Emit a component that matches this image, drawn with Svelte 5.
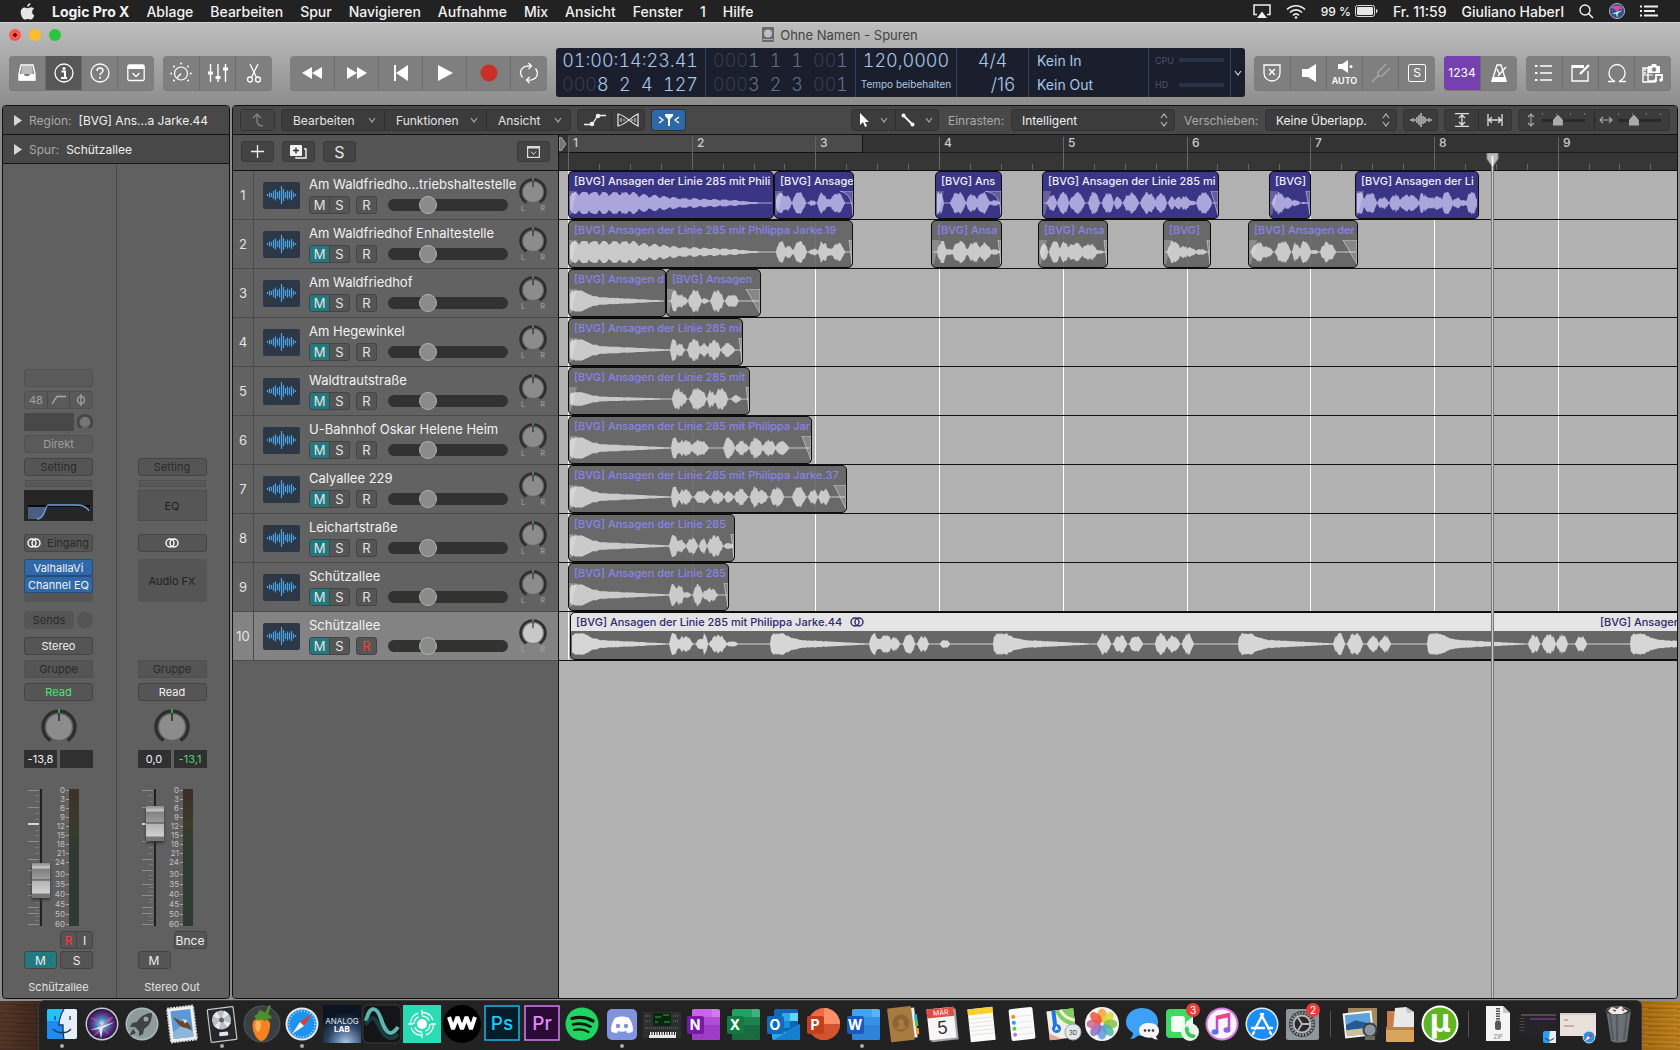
<script>
  const menus = ['Ablage', 'Bearbeiten', 'Spur', 'Navigieren', 'Aufnahme', 'Mix', 'Ansicht', 'Fenster', '1', 'Hilfe'];

  // bar lines in px from the left edge of the timeline
  const bars = Array.from({ length: 16 }, (_, i) => ({ n: i + 1, x: Math.round(9 + i * 123.7) }));
  const ticks = Array.from({ length: 64 }, (_, i) => Math.round(9 + i * 30.925)).filter((_, i) => i % 4);

  const LINE = '[BVG] Ansagen der Linie 285';

  // decaying tone: list of [x, amplitude]
  function ring(x, len, peak = 11) {
    const shape = [[0, 0.7], [0.03, 1], [0.12, 1], [0.2, 0.6], [0.3, 0.38], [0.5, 0.28], [0.7, 0.18], [0.9, 0.08], [1, 0.04]];
    return [[x - 1, 0], ...shape.map(([t, a]) => [x + t * len, a * peak])];
  }

  const longTone = [[0, 9], [5, 11], [60, 11], [75, 8], [90, 7], [110, 5], [140, 4], [165, 3], [185, 1], [205, 0]];

  // blobs are [centre, half width, amplitude]
  const tracks = [
    { name: 'Am Waldfriedho...triebshaltestelle', muted: false, regions: [
      { x: 9, w: 206, label: LINE + ' mit Phili', beat: true, tone: longTone, blobs: [] },
      { x: 215, w: 80, label: '[BVG] Ansage', fade: 13, curve: true, blobs: [[5, 4, 11], [11, 5, 8], [24, 6, 11], [37, 3, 3], [47, 4, 11], [54, 4, 4], [62, 7, 10]] },
      { x: 376, w: 67, label: '[BVG] Ans', fade: 16, curve: true, blobs: [[3, 4, 11], [22, 7, 11], [36, 5, 9], [47, 6, 11], [58, 5, 3]] },
      { x: 483, w: 177, label: LINE + ' mi', fade: 7, blobs: [[9, 4, 8], [20, 5, 11], [34, 7, 10], [51, 5, 11], [65, 5, 10], [75, 3, 7], [88, 7, 10], [105, 7, 11], [118, 5, 10], [129, 3, 6], [135, 3, 6], [142, 4, 7], [149, 3, 3], [161, 7, 11]] },
      { x: 710, w: 42, label: '[BVG]', fade: 4, blobs: [[9, 6, 11], [18, 4, 6], [25, 4, 3], [34, 3, 1]] },
      { x: 796, w: 124, label: '[BVG] Ansagen der Li', fade: 0, blobs: [[4, 4, 11], [14, 6, 11], [27, 5, 6], [39, 5, 9], [53, 10, 8], [66, 2, 11], [70, 3, 8], [76, 3, 6], [82, 5, 7], [91, 5, 11], [101, 4, 5], [107, 4, 3], [116, 5, 11]] }
    ] },
    { name: 'Am Waldfriedhof Enhaltestelle', muted: true, regions: [
      { x: 9, w: 285, label: LINE + ' mit Philippa Jarke.19', fade: 3, beat: true, tone: longTone, blobs: [[212, 4, 11], [219, 5, 6], [231, 6, 11], [245, 5, 3], [254, 4, 11], [261, 4, 4], [269, 6, 9]] },
      { x: 372, w: 71, label: '[BVG] Ansa', fade: 3, blobs: [[10, 4, 11], [18, 4, 3], [28, 7, 11], [42, 6, 10], [53, 6, 9], [62, 5, 3]] },
      { x: 479, w: 70, label: '[BVG] Ansa', fade: 3, blobs: [[5, 3, 10], [16, 5, 11], [25, 4, 10], [36, 8, 9], [50, 8, 8], [60, 4, 2]] },
      { x: 604, w: 48, label: '[BVG]', fade: 3, blobs: [[10, 6, 11], [20, 4, 6], [27, 4, 5], [37, 5, 3]] },
      { x: 689, w: 110, label: '[BVG] Ansagen der', fade: 14, blobs: [[9, 6, 10], [17, 6, 6], [34, 7, 11], [47, 3, 9], [56, 5, 11], [65, 4, 2], [79, 7, 10]] }
    ] },
    { name: 'Am Waldfriedhof', muted: true, regions: [
      { x: 9, w: 98, label: '[BVG] Ansagen d', fade: 0, tone: ring(0, 98), blobs: [] },
      { x: 107, w: 95, label: '[BVG] Ansagen', fade: 14, blobs: [[8, 3, 11], [14, 6, 6], [28, 6, 11], [38, 3, 3], [50, 6, 11], [65, 6, 7]] }
    ] },
    { name: 'Am Hegewinkel', muted: true, regions: [
      { x: 9, w: 175, label: LINE + ' mi', fade: 3, tone: ring(0, 105), blobs: [[105, 3, 11], [111, 4, 6], [125, 6, 11], [135, 4, 7], [145, 6, 10], [159, 6, 7]] }
    ] },
    { name: 'Waldtrautstraße', muted: true, regions: [
      { x: 9, w: 182, label: LINE + ' mit', fade: 3, tone: ring(0, 105, 7), blobs: [[108, 4, 11], [113, 4, 7], [129, 8, 11], [142, 3, 9], [152, 6, 11], [167, 4, 4]] }
    ] },
    { name: 'U-Bahnhof Oskar Helene Heim', muted: true, regions: [
      { x: 9, w: 244, label: LINE + ' mit Philippa Jar', fade: 9, tone: ring(0, 105), blobs: [[106, 3, 11], [116, 8, 8], [131, 8, 8], [160, 5, 11], [173, 6, 7], [187, 6, 10], [200, 6, 8], [213, 6, 7]] }
    ] },
    { name: 'Calyallee 229', muted: true, regions: [
      { x: 9, w: 279, label: LINE + ' mit Philippa Jarke.37', fade: 12, tone: ring(0, 105), blobs: [[106, 3, 11], [116, 6, 8], [133, 7, 7], [148, 6, 7], [160, 4, 6], [172, 6, 8], [186, 4, 10], [193, 5, 7], [208, 6, 10], [230, 6, 10], [244, 4, 7], [255, 5, 8]] }
    ] },
    { name: 'Leichartstraße', muted: true, regions: [
      { x: 9, w: 167, label: LINE, fade: 3, tone: ring(0, 105), blobs: [[105, 4, 11], [112, 4, 6], [123, 5, 8], [134, 3, 8], [146, 7, 11], [160, 5, 3]] }
    ] },
    { name: 'Schützallee', muted: true, regions: [
      { x: 9, w: 161, label: LINE, fade: 4, tone: ring(0, 105), blobs: [[104, 3, 11], [110, 5, 9], [118, 3, 3], [129, 4, 11], [141, 7, 7]] }
    ] },
    { name: 'Schützallee', muted: true, selected: true, regions: [
      { x: 11, w: 1400, label: LINE + ' mit Philippa Jarke.44', selected: true, fade: 0,
        tone: [...ring(0, 100), ...ring(200, 100), ...ring(423, 100), ...ring(668, 100), ...ring(857, 100), ...ring(1060, 100)],
        blobs: [[103, 4, 11], [114, 7, 8], [130, 4, 6], [134, 2, 11], [147, 8, 9], [161, 5, 3], [303, 4, 11], [314, 7, 9], [324, 4, 7], [338, 5, 11], [352, 5, 8], [374, 4, 4], [533, 6, 10], [549, 6, 9], [565, 6, 8], [590, 5, 11], [602, 6, 8], [617, 5, 10], [768, 5, 11], [784, 7, 11], [802, 5, 8], [814, 5, 8], [963, 5, 9], [978, 6, 10], [991, 5, 9], [1010, 5, 8]] }
    ] }
  ];

  function amplitude(region, x) {
    let a = 0.6;
    const tone = region.tone ?? [];
    for (let i = 1; i < tone.length; i++) {
      const [x0, a0] = tone[i - 1];
      const [x1, a1] = tone[i];
      if (x >= x0 && x < x1) a = Math.max(a, a0 + ((a1 - a0) * (x - x0)) / (x1 - x0));
    }
    if (region.beat) a *= 0.7 + 0.4 * Math.abs(Math.sin(x / 3.2));
    const noise = Math.abs(Math.sin((x + region.x) * 12.9898) * 43758.5453) % 1;
    a *= 0.85 + 0.2 * noise;
    for (const [c, hw, peak] of region.blobs) {
      const d = Math.abs(x - c) / (hw + 1);
      if (d < 1) a = Math.max(a, peak * (1 - d ** 2.4) * (0.72 + 0.42 * noise));
    }
    return Math.min(11, Math.max(0.6, a));
  }

  function wavePath(region) {
    const up = [];
    const down = [];
    for (let x = 1; x < region.w - 2; x++) {
      const a = amplitude(region, x);
      up.push(`${x} ${(12 - a).toFixed(1)}`);
      down.unshift(`${x} ${(12 + a).toFixed(1)}`);
    }
    return `M${up.join('L')}L${down.join('L')}Z`;
  }

  const trackBars = [2, 5, 4, 8, 11, 6, 9, 18, 12, 6, 9, 7, 10, 5, 2];

  const scale = [[0, 1], [3, 10], [6, 19], [9, 28], [12, 37], [15, 46], [18, 55], [21, 64], [24, 73], [30, 85], [35, 95], [40, 105], [45, 115], [50, 125], [60, 135]];
  const longTicks = [1, 18, 52, 70, 81, 95, 106, 118, 124, 135];
  const shortTicks = [6, 12, 24, 30, 41, 46, 58, 64, 75, 86, 90, 98, 102, 110, 113, 121, 127, 131];

  const leftApps = [
    { name: 'Finder', running: true }, { name: 'Siri' }, { name: 'Launchpad' }, { name: 'Mail' },
    { name: 'Logic', running: true }, { name: 'FL Studio' }, { name: 'Safari', running: true }, { name: 'Analog Lab' },
    { name: 'Serum' }, { name: 'Kontakt' }, { name: 'Waves' }, { name: 'Photoshop' }, { name: 'Premiere' },
    { name: 'Spotify' }, { name: 'Discord', running: true }, { name: 'Synth' }, { name: 'OneNote' },
    { name: 'Excel' }, { name: 'Outlook' }, { name: 'PowerPoint' }, { name: 'Word', running: true },
    { name: 'Contacts' }, { name: 'Calendar' }, { name: 'Notes' }, { name: 'Reminders' }, { name: 'Maps' },
    { name: 'Photos' }, { name: 'Messages' }, { name: 'FaceTime', badge: 3 }, { name: 'iTunes' },
    { name: 'App Store' }, { name: 'Settings', badge: 2 }
  ];
  const middleApps = [{ name: 'Preview' }, { name: 'Unarchiver' }, { name: 'Torrent' }];
  const rightApps = [{ name: 'Zip' }, { name: 'Finder window' }, { name: 'Safari window' }, { name: 'Trash' }];
  const office = {
    OneNote: { c: 'N', dark: '#7719aa', main: '#ca64ea', mid: '#9332bf' },
    Excel: { c: 'X', dark: '#107c41', main: '#21a366', mid: '#185c37' },
    Word: { c: 'W', dark: '#185abd', main: '#41a5ee', mid: '#2b7cd3' }
  };
  const petals = ['#f8a02a', '#d9d83a', '#86c440', '#4fb6a0', '#5b9bdc', '#8a6fc0', '#d0619a', '#ee5340'];
</script>

{#snippet chevron()}
  <svg class="chev" width="8" height="6" viewBox="0 0 8 6"><path d="M1 1l3 4 3-4" fill="none" stroke="currentColor" stroke-width="1.2" /></svg>
{/snippet}

{#snippet updown()}
  <svg class="updown" width="8" height="14" viewBox="0 0 8 14"><path d="M1 5l3-4 3 4M1 9l3 4 3-4" fill="none" stroke="#bbb" stroke-width="1.1" /></svg>
{/snippet}

{#snippet rings(color)}
  <svg width="14" height="10" viewBox="0 0 14 10"><g fill="none" stroke={color} stroke-width="1.4"><circle cx="5" cy="5" r="4" /><circle cx="9" cy="5" r="4" /></g></svg>
{/snippet}

{#snippet knob(size, face)}
  <svg width={size} height={size} viewBox="0 0 36 36">
    <path d="M9.500 31.500A16 16 0 1 1 26.500 31.500" fill="none" stroke="#2e2e2e" stroke-width="3.400" />
    <circle cx="18" cy="18" r="13.500" fill={face} stroke="#555" stroke-width=".8" />
    <path d="M18 4v8" stroke="#1a1a1a" stroke-width="1.300" />
    <path d="M18 0v4" stroke="#44d65c" stroke-width="1.400" />
  </svg>
{/snippet}

{#snippet fader(name, value, hot)}
  <div class="fader">
    <svg width="69" height="138" viewBox="0 0 69 138">
      <defs>
        <linearGradient id="meter-{name}" x1="0" y1="0" x2="0" y2="1">
          <stop offset="0" stop-color={hot} /><stop offset=".25" stop-color="#3b3a2c" /><stop offset=".4" stop-color="#2f3b31" /><stop offset="1" stop-color="#2e3b32" />
        </linearGradient>
      </defs>
      <g stroke="#8e8e8e">
        {#each longTicks as y}<path d="M4 {y + 0.5}h11" />{/each}
        {#each shortTicks as y}<path d="M11 {y + 0.5}h4" stroke="#7c7c7c" />{/each}
      </g>
      <path d="M4 35h11" stroke="#fff" stroke-width="1.500" />
      <rect x="16" y="0" width="2" height="137" fill="#222" />
      {#each scale as [n, y]}
        <text x="41" y={y + 3} text-anchor="end">{n}</text>
        <path d="M42 {y + 0.5}h3" stroke="#a5a5a5" />
      {/each}
      <rect x="45" y="0" width="10" height="137" fill="url(#meter-{name})" />
    </svg>
    <input class="vrange" type="range" min="0" max="100" {value} aria-label="Lautstärke {name}" />
  </div>
{/snippet}

{#snippet appIcon(name)}
  <svg width="40" height="40" viewBox="0 0 40 40">
    {#if name === 'Finder'}
      <rect x="5" y="5" width="30" height="30" rx="2" fill="#2a9df4" />
      <path d="M5 7a2 2 0 0 1 2-2h14c-3 5-4 10-4 15h5v15H7a2 2 0 0 1-2-2z" fill="#1e8bf0" />
      <path d="M5 7a2 2 0 0 1 2-2h14c-2 3-3 7-4 12H5z" fill="#22c3f5" />
      <path d="M22 5h11a2 2 0 0 1 2 2v26a2 2 0 0 1-2 2H22c-1-4-1-8-1-14h-4c0-6 2-12 5-16z" fill="#e6eef6" />
      <path d="M13 12v4M28 12v4M11 25c5 5 14 5 18 0M22 5c-3 5-5 10-5 16h4c0 5 0 10 1 14" fill="none" stroke="#143a63" stroke-width="1.300" />
    {:else if name === 'Siri'}
      <defs><radialGradient id="siri"><stop offset="0" stop-color="#bff" /><stop offset=".35" stop-color="#3b8fc4" /><stop offset=".7" stop-color="#5a2f80" /><stop offset="1" stop-color="#22153f" /></radialGradient></defs>
      <circle cx="20" cy="20" r="16.500" fill="#c9c9cf" /><circle cx="20" cy="20" r="15" fill="url(#siri)" />
      <path d="M7 14c6-1 9 3 13 8 3-6 7-9 12-9-4 3-8 6-10 11l6 7c-4-2-6-4-8-6-2 3-5 6-9 7 4-4 6-6 7-10-3-4-6-7-11-8z" fill="#ff4d9d" opacity=".6" />
      <path d="M20 22l13-4-12 6-2 11-2-10-9 1z" fill="#d5fff8" opacity=".9" />
    {:else if name === 'Launchpad'}
      <circle cx="20" cy="20" r="16.500" fill="#aebabb" /><circle cx="20" cy="20" r="15" fill="#8f9a9b" />
      <path d="M30 9c-7 0-12 4-15 9l-5 1-2 4 5 0 4 4 0 5 4-2 1-5c5-3 8-8 8-16z" fill="#3e4446" /><circle cx="24" cy="15" r="2.500" fill="#9aa5a6" /><path d="M11 25l-4 7 7-3z" fill="#3e4446" />
    {:else if name === 'Mail'}
      <g transform="rotate(-7 20 20)"><rect x="7" y="3" width="26" height="34" fill="#f2f2f2" stroke="#ddd" stroke-dasharray="2 1" stroke-width="2" /><rect x="10" y="6" width="20" height="28" fill="#5b9ad6" /><path d="M10 27l9-5 11 7v5H10z" fill="#8fb6d8" /><path d="M12 12l7 5 5 1c3 2 5 6 5 9l-6-3c-4 0-8-5-11-12z" fill="#6b4524" /><path d="M21 15l5 2-3 3z" fill="#e9dfc9" /></g>
    {:else if name === 'Logic'}
      <g transform="rotate(-7 20 20)"><rect x="7" y="4" width="26" height="33" rx="1" fill="#26272c" stroke="#c6c6c6" stroke-width="1.200" /><circle cx="20" cy="16" r="9.500" fill="#b9bec6" /><path d="M20 16L12 11l4-4zM20 16l9 4-4 4zM20 16l4-9 4 4zM20 16l-4 9-4-4z" fill="#e6e9ee" /><circle cx="20" cy="16" r="2.500" fill="#60656e" /><rect x="16" y="28" width="9" height="4" rx="1" fill="#dfe4ee" /></g>
    {:else if name === 'FL Studio'}
      <circle cx="20" cy="20" r="18" fill="#3a3f42" stroke="#555b5e" /><path d="M11 18c3-6 15-5 17 1 1 6-3 17-8 18-6 0-11-12-9-19z" fill="#f58220" /><path d="M14 18c2-3 5-2 5 2 0 5-2 8-3 8-2-1-4-7-2-10z" fill="#ffb25c" /><path d="M12 12c3-1 5-3 5-6 3 0 5 2 6 3l4-8 2 1-3 8c3 1 4 3 3 5-3-1-5 0-6 3-2-3-4-3-7-1-1-2-3-3-4-5z" fill="#4c8f2c" />
    {:else if name === 'Safari'}
      <circle cx="20" cy="20" r="16.500" fill="#e8e8e8" /><circle cx="20" cy="20" r="14.500" fill="#1e93ee" /><circle cx="20" cy="20" r="13" fill="none" stroke="#bfe2ff" stroke-dasharray="1 2" stroke-width="1.500" />
      <path d="M30 10L22 22l-4-4z" fill="#e8372c" /><path d="M10 30l8-12 4 4z" fill="#f2f2f2" />
    {:else if name === 'Analog Lab'}
      <defs><radialGradient id="alab" cx=".6" cy="1" r=".8"><stop offset="0" stop-color="#a9c7ee" /><stop offset=".6" stop-color="#2c4463" /><stop offset="1" stop-color="#0e1522" /></radialGradient></defs>
      <rect x="1" y="1" width="38" height="38" fill="url(#alab)" /><text x="20" y="20" font-size="8" text-anchor="middle" fill="#dfe5ee">ANALOG</text><text x="20" y="28" font-size="8" font-weight="700" text-anchor="middle" fill="#fff">LAB</text>
    {:else if name === 'Serum'}
      <rect x="1" y="1" width="38" height="38" rx="6" fill="#141518" stroke="#3b3b3b" /><path d="M4 17C8 0 15 3 19 15s9 20 17 8" fill="none" stroke="#5fb6ae" stroke-width="4" /><path d="M4 21c6-12 10-6 14 3s12 14 18 6" fill="none" stroke="#1b4c52" stroke-width="4" opacity=".7" />
    {:else if name === 'Kontakt'}
      <rect x="1" y="1" width="38" height="38" fill="#29dcb4" /><circle cx="20" cy="20" r="5" fill="#fff" /><g fill="none" stroke="#fff" stroke-width="1.300"><circle cx="20" cy="20" r="8" stroke-dasharray="9 3.500" /><circle cx="20" cy="20" r="11.500" stroke-dasharray="14 4" /><path d="M20 6v5M20 29v5M6 20h5M29 20h5" /></g>
    {:else if name === 'Waves'}
      <circle cx="20" cy="20" r="19" fill="#000" /><path d="M7 13l4 12 4.500-12L20 25l4.500-12L29 25l4-12" fill="none" stroke="#fff" stroke-width="4" stroke-linejoin="bevel" />
    {:else if name === 'Photoshop'}
      <rect x="3" y="2" width="34" height="34" fill="#051d2a" stroke="#17b6e8" stroke-width="1.500" /><text x="20" y="26" font-size="19" font-weight="500" text-anchor="middle" fill="#20c8f7">Ps</text>
    {:else if name === 'Premiere'}
      <rect x="3" y="2" width="34" height="34" fill="#2b0a36" stroke="#d67ff0" stroke-width="1.500" /><text x="20" y="26" font-size="19" font-weight="500" text-anchor="middle" fill="#df8cf5">Pr</text>
    {:else if name === 'Spotify'}
      <circle cx="20" cy="20" r="16.500" fill="#1ed760" /><g fill="none" stroke="#191414" stroke-linecap="round"><path d="M10 14.500c7-2 15-1 21 2.500" stroke-width="3.200" /><path d="M11 20.500c6-1.500 12-1 17.500 2.200" stroke-width="2.600" /><path d="M12 26c5-1 10-.7 14.500 2" stroke-width="2.200" /></g>
    {:else if name === 'Discord'}
      <rect x="5" y="5" width="30" height="31" rx="5" fill="#7f93de" /><path d="M13 14c4-2 10-2 14 0 3 4 4 8 4 13-2 2-4 2-6 2l-1-2c-3 1-5 1-8 0l-1 2c-2 0-4 0-6-2 0-5 1-9 4-13z" fill="#fff" /><circle cx="16" cy="22" r="2.200" fill="#7f93de" /><circle cx="24" cy="22" r="2.200" fill="#7f93de" />
    {:else if name === 'Synth'}
      <rect x="1" y="8" width="38" height="26" fill="#2e2f31" /><rect x="11" y="9" width="18" height="13" fill="#0c2411" /><path d="M13 13h6M21 11h6M13 18h3M22 18h6" stroke="#27b23d" stroke-width="1" /><path d="M3 12h6M31 12h6M3 17h6M31 17h6M3 24h34" stroke="#555" stroke-dasharray="1 1" stroke-width="2" /><rect x="7" y="28" width="27" height="6" fill="#e8e8e8" /><path d="M7 29.500h27" stroke="#222" stroke-width="3" stroke-dasharray="1 1.500" />
    {:else if office[name]}
      {@const o = office[name]}
      <rect x="10" y="5" width="28" height="31" rx="2" fill={o.main} /><path d="M10 13h28v8H10z" fill={o.mid} opacity=".45" /><path d="M10 21h28v13a2 2 0 0 1-2 2H12a2 2 0 0 1-2-2z" fill={o.mid} opacity=".8" /><path d="M30 5h6a2 2 0 0 1 2 2v6h-8z" fill="#fff" opacity=".15" />
      <rect x="5" y="12" width="17" height="18" rx="2" fill={o.dark} /><text x="13" y="26" font-size="14" font-weight="700" text-anchor="middle" fill="#fff">{o.c}</text>
    {:else if name === 'Outlook'}
      <rect x="12" y="5" width="24" height="25" rx="2" fill="#1066b5" /><path d="M20 9h8v8h-8z" fill="#32a9e7" /><path d="M28 9h8v8h-8z" fill="#58d9fd" /><path d="M20 17h8v7h-8z" fill="#1490df" /><path d="M10 20l14 8 14-8v14a2 2 0 0 1-2 2H12a2 2 0 0 1-2-2z" fill="#28a8ea" /><path d="M38 20L12 36h24a2 2 0 0 0 2-2z" fill="#1480cf" />
      <rect x="5" y="12" width="17" height="18" rx="2" fill="#0f6cbd" /><text x="13" y="26" font-size="14" font-weight="700" text-anchor="middle" fill="#fff">O</text>
    {:else if name === 'PowerPoint'}
      <circle cx="22" cy="20" r="16" fill="#ed6c47" /><path d="M22 4a16 16 0 0 1 16 16H22z" fill="#ff8f6b" /><path d="M6 20h32a16 16 0 0 1-32 0z" fill="#d35230" />
      <rect x="5" y="12" width="17" height="18" rx="2" fill="#c43e1c" /><text x="13" y="26" font-size="14" font-weight="700" text-anchor="middle" fill="#fff">P</text>
    {:else if name === 'Contacts'}
      <g transform="rotate(-7 20 20)"><rect x="12" y="5" width="22" height="30" fill="#eee" /><path d="M33 12h3v6h-3z" fill="#2bb3e8" /><path d="M33 18h3v6h-3z" fill="#62c540" /><path d="M33 26h3v6h-3z" fill="#f2a33a" /><rect x="7" y="3" width="24" height="34" rx="1" fill="#a87b41" /><circle cx="19" cy="19" r="8.500" fill="#8c6534" /><path d="M14 25c0-4 4-3 3-6-2-4 5-6 5-1 0 3-1 4 3 7z" fill="#a87b41" /></g>
    {:else if name === 'Calendar'}
      <g transform="rotate(-6 20 20)"><rect x="8" y="6" width="27" height="31" fill="#9fa3a6" /><rect x="6" y="4" width="27" height="31" fill="#f6f6f6" /><rect x="6" y="4" width="27" height="9" fill="#e24b41" /><text x="20" y="11" font-size="7" text-anchor="middle" fill="#fff">MÄR</text><text x="20" y="30" font-size="18" text-anchor="middle" fill="#333">5</text></g>
    {:else if name === 'Notes'}
      <g transform="rotate(-6 20 20)"><rect x="7" y="4" width="25" height="33" fill="#fbfbf8" /><rect x="7" y="4" width="25" height="6" fill="#f8cf2c" /><path d="M7 14h25M7 18h25M7 22h25M7 26h25M7 30h25" stroke="#d9d9d4" stroke-width=".7" /></g>
    {:else if name === 'Reminders'}
      <g transform="rotate(-6 20 20)"><rect x="8" y="4" width="24" height="32" rx="2" fill="#fafafa" /><circle cx="12" cy="12" r="2" fill="#f58b1f" /><circle cx="12" cy="18" r="2" fill="#1fa2f1" /><circle cx="12" cy="24" r="2" fill="#5cc93c" /><circle cx="12" cy="30" r="2" fill="#c26fe0" /><path d="M16 12h14M16 18h14M16 24h14M16 30h14" stroke="#ddd" stroke-width=".7" /></g>
    {:else if name === 'Maps'}
      <g transform="rotate(-7 18 20)"><rect x="6" y="6" width="27" height="29" fill="#f1eee4" /><path d="M14 6h19v18C24 22 18 16 14 6z" fill="#7fce5f" /><path d="M20 6c2 6 7 10 13 12" fill="none" stroke="#f4f0e0" stroke-width="3" /><path d="M6 28l12 7H6z" fill="#e5a6a0" /><path d="M13 6v20" stroke="#1f77e5" stroke-width="4" /><circle cx="14" cy="24" r="4.500" fill="#1f77e5" /><path d="M14 21l2 5-2-1-2 1z" fill="#fff" /></g>
      <circle cx="31" cy="28" r="8" fill="#e4e7e9" stroke="#9aa4aa" /><text x="31" y="31" font-size="6" text-anchor="middle" fill="#333">3D</text>
    {:else if name === 'Photos'}
      <circle cx="20" cy="20" r="17" fill="#f3f3f3" />
      {#each petals as color, i}<ellipse cx="20" cy="11.500" rx="4.500" ry="7" fill={color} opacity=".85" transform="rotate({i * 45} 20 20)" />{/each}
    {:else if name === 'Messages'}
      <path d="M20 4c9 0 16 6 16 14s-7 14-16 14l-4-.5C14 34 11 35 8 35c2-2 3-4 3-6-4-3-7-6-7-11C4 10 11 4 20 4z" fill="#3da2f7" /><path d="M27 19c6 0 10 3 10 7.500 0 3-1 4-3 6 0 1 1 2 2 3-2 0-4 0-6-2-7 1-13-2-13-7S21 19 27 19z" fill="#f5f5f5" /><circle cx="23" cy="26.500" r="1.300" fill="#333" /><circle cx="27" cy="26.500" r="1.300" fill="#333" /><circle cx="31" cy="26.500" r="1.300" fill="#333" />
    {:else if name === 'FaceTime'}
      <rect x="4" y="5" width="27" height="29" rx="4" fill="#3ddb62" /><rect x="9" y="12" width="14" height="16" rx="3" fill="#f4fff4" /><path d="M24 18l7-5v13l-7-5z" fill="#f4fff4" /><circle cx="28" cy="28" r="9" fill="#eaf5ea" /><path d="M23 24c2-3 3-1 4 1 0 2-1 2 1 4s3 1 4 1c2 1 2 3 0 4-5 1-10-5-9-10z" fill="#37c95a" />
    {:else if name === 'iTunes'}
      <circle cx="20" cy="20" r="16.500" fill="#d67ae0" /><circle cx="20" cy="20" r="14.500" fill="#f7f5fa" /><path d="M15 28V13l12-3v15" fill="none" stroke="#c04bd0" stroke-width="2.500" /><ellipse cx="13" cy="28" rx="3.500" ry="2.800" fill="#5a74e6" /><ellipse cx="25" cy="26" rx="3.500" ry="2.800" fill="#8f61dc" /><path d="M14 12l14-3v4l-14 3z" fill="#f0467f" />
    {:else if name === 'App Store'}
      <circle cx="20" cy="20" r="16.500" fill="#dcebf8" /><circle cx="20" cy="20" r="15" fill="#1b8df5" /><g stroke="#fff" stroke-width="2.400" stroke-linecap="round"><path d="M21 10l-8 15M19 10l8 15M10 24h12M26 24h4M12 28l-1 2M28 28l1 2" /></g>
    {:else if name === 'Settings'}
      <rect x="4" y="5" width="33" height="31" rx="2" fill="#8f979e" /><circle cx="20" cy="20" r="13" fill="#2b2b2d" /><circle cx="20" cy="20" r="11" fill="none" stroke="#8b8d90" stroke-width="3" stroke-dasharray="2 1" /><circle cx="20" cy="20" r="8.500" fill="none" stroke="#b5b7ba" stroke-width="2" /><path d="M20 20l-5-8M20 20h9M20 20l-5 8" stroke="#b5b7ba" stroke-width="1.800" />
    {:else if name === 'Preview'}
      <path d="M8 4h29v24H8z" fill="#a2895e" /><g transform="rotate(-6 18 22)"><rect x="4" y="8" width="29" height="25" fill="#f5f5f5" /><rect x="6" y="10" width="25" height="21" fill="#5ea1db" /><path d="M6 20l10-4 15 5v4H6z" fill="#235b94" /><path d="M6 25h25v6H6z" fill="#cfc09b" /></g><circle cx="30" cy="26" r="6.500" fill="#8a96a3" stroke="#3b3f44" stroke-width="2" /><path d="M25 32h10v4H25z" fill="#6f6a60" />
    {:else if name === 'Unarchiver'}
      <rect x="7" y="7" width="8" height="16" fill="#c87f4a" /><path d="M15 4l11-1 8 5v17H13z" fill="#e8e8e8" /><path d="M26 3l1 6 7-1z" fill="#c4c4c4" /><rect x="6" y="23" width="28" height="15" rx="1" fill="#d9a35b" /><path d="M6 23h28v3H6z" fill="#b98441" />
    {:else if name === 'Torrent'}
      <circle cx="20" cy="20" r="18.500" fill="#fff" /><circle cx="20" cy="20" r="16.500" fill="#5fb522" /><text x="20" y="28" font-size="32" font-weight="700" text-anchor="middle" fill="#fff">µ</text>
    {:else if name === 'Zip'}
      <path d="M8 2h17l7 7v28H8z" fill="#f4f4f4" /><path d="M25 2v7h7z" fill="#c8c8c8" /><path d="M20 4v14" stroke="#555" stroke-width="4" stroke-dasharray="1.500 1" /><rect x="17" y="17" width="6" height="9" rx="2" fill="#51585e" /><text x="20" y="35" font-size="6" text-anchor="middle" fill="#888">ZIP</text>
    {:else if name === 'Finder window'}
      <rect x="3" y="10" width="35" height="22" fill="#252428" /><path d="M3 11h35" stroke="#514a55" stroke-width="2" /><path d="M12 15h26" stroke="#6b2d74" stroke-width="2" /><path d="M4 14v15" stroke="#444" stroke-width="5" stroke-dasharray="1 2" /><rect x="25" y="27" width="13" height="12" rx="2" fill="#2a9df4" /><path d="M32 27h6v12h-6c-1-2-1-4-1-6z" fill="#e6eef6" /><path d="M27 34c2 3 7 3 9 0" stroke="#143a63" fill="none" />
    {:else if name === 'Safari window'}
      <rect x="2" y="9" width="36" height="23" fill="#eae0dc" /><path d="M2 10h36" stroke="#cfcfcf" stroke-width="2" /><path d="M6 16h4M6 22h10" stroke="#b07a6a" /><circle cx="31" cy="33" r="6" fill="#2a93e8" stroke="#ddd" /><path d="M35 29l-3 5-2-2z" fill="#e8372c" /><path d="M27 37l3-5 2 2z" fill="#fff" />
    {:else}
      <path d="M8 5c6-4 18-4 25 1l-4 31c-4 2-12 2-16 0z" fill="#6b7074" /><path d="M12 10l3 26M19 11v26M29 10l-3 26" stroke="#55595d" stroke-width="2" /><ellipse cx="20" cy="7" rx="13" ry="3.500" fill="#3a3d40" /><path d="M10 7l4-4 5 2 4-3 3 3 4 2-6 3H14z" fill="#eee" /><path d="M15 6l3 1M24 5l2 2" stroke="#c1404a" stroke-width="1.500" />
    {/if}
  </svg>
{/snippet}

{#snippet dockItem(app)}
  <button class="app" aria-label={app.name}>
    {@render appIcon(app.name)}
    {#if app.badge}<span class="badge">{app.badge}</span>{/if}
    {#if app.running}<span class="dot"></span>{/if}
  </button>
{/snippet}

<div class="desktop">
  <nav class="menubar">
    <button class="apple" aria-label="Apple">
      <svg width="15" height="17" viewBox="0 0 15 17"><path d="M10.500 0c0 2-1.500 3.700-3.300 3.700C7 2 8.700.2 10.500 0zM14.300 12.400c-.9 2.200-2.200 4.200-3.700 4.200-1 0-1.500-.6-2.700-.6s-1.800.6-2.700.6C3 16.600.7 12.800.7 9.300c0-3 1.900-4.900 4-4.900 1.200 0 2.200.8 3 .8.900 0 2-.9 3.500-.9 1 0 2 .5 2.800 1.500-2.700 1.700-2.200 5.400.3 6.600z" fill="#e6e6e6" /></svg>
    </button>
    <button class="strong">Logic Pro X</button>
    {#each menus as m}<button>{m}</button>{/each}
    <div class="status">
      <svg width="18" height="16" viewBox="0 0 18 16"><path d="M4 11.500H1V2h16v9.500h-3" fill="none" stroke="#eee" stroke-width="1.500" /><path d="M9 8.500l5 6.500H4z" fill="#eee" /></svg>
      <svg width="20" height="15" viewBox="0 0 20 15"><g fill="none" stroke="#eee" stroke-width="1.700"><path d="M1 5.500c5-5 13-5 18 0M4 8.500c3.500-3.500 8.500-3.500 12 0M7 11.300c2-1.800 4-1.800 6 0" /></g><circle cx="10" cy="13.500" r="1.300" fill="#eee" /></svg>
      <span class="battery"><span class="small">99 %</span>
        <svg width="23" height="12" viewBox="0 0 23 12"><rect x=".5" y=".5" width="19" height="11" rx="2" fill="none" stroke="#ddd" /><rect x="2" y="2" width="16" height="8" rx="1" fill="#e6e6e6" /><path d="M21 4c2 0 2 4 0 4z" fill="#ddd" /></svg>
      </span>
      <span>Fr. 11:59</span>
      <span>Giuliano Haberl</span>
      <svg width="15" height="15" viewBox="0 0 15 15"><circle cx="6" cy="6" r="5" fill="none" stroke="#eee" stroke-width="1.400" /><path d="M9.500 9.500L14 14" stroke="#eee" stroke-width="1.600" /></svg>
      <svg width="16" height="16" viewBox="0 0 40 40"><circle cx="20" cy="20" r="19" fill="#3a4f86" stroke="#c5cbe0" stroke-width="2" /><path d="M4 12c8-8 24-8 32 2-6-1-11 2-16 8C15 16 10 12 4 12z" fill="#d34f9c" /><path d="M20 22l14-4-12 8-1 11-4-10-11 1z" fill="#b9f4f0" /></svg>
      <svg width="18" height="12" viewBox="0 0 18 12"><path d="M0 1.500h2M4 1.500h14M0 6h2M4 6h11M0 10.500h2M4 10.500h14" stroke="#eee" stroke-width="1.800" /></svg>
    </div>
  </nav>

  <main class="window">
    <header class="chrome">
      <div class="titlebar">
        <div class="lights"><button class="close" aria-label="Schließen"></button><button class="mini" aria-label="Minimieren"></button><button class="full" aria-label="Vollbild"></button></div>
        <svg width="12" height="15" viewBox="0 0 12 15"><rect width="12" height="15" rx="1" fill="#6a6a6a" /><circle cx="6" cy="6.500" r="4" fill="#b9bfc9" /><path d="M1 12.500h10" stroke="#aaa" /></svg>
        <h1>Ohne Namen - Spuren</h1>
      </div>

      <div class="toolrow">
        <div class="group">
          <button aria-label="Bibliothek"><svg width="18" height="18" viewBox="0 0 18 18"><path d="M3 1h12l2 9v6H1v-6z" fill="none" stroke="#fff" stroke-width="1.400" /><path d="M4 2h10l1 8H3z" fill="#bbb" /><path d="M1 10h5c0 3 6 3 6 0h5v6.500H1z" fill="#fff" /></svg></button>
          <button class="dark" aria-label="Inspektor"><svg width="20" height="20" viewBox="0 0 20 20"><circle cx="10" cy="10" r="9" fill="none" stroke="#fff" stroke-width="1.300" /><circle cx="10" cy="5.500" r="1.600" fill="#fff" /><path d="M7.500 8.500h3.500V15M7 15h6" stroke="#fff" stroke-width="2" fill="none" /></svg></button>
          <button aria-label="Schnelle Hilfe"><svg width="20" height="20" viewBox="0 0 20 20"><circle cx="10" cy="10" r="9" fill="none" stroke="#fff" stroke-width="1.300" /><path d="M7 8c0-4 6-4 6-.5 0 2.500-3 2-3 4.700" fill="none" stroke="#fff" stroke-width="1.500" /><circle cx="10" cy="14.700" r="1" fill="#fff" /></svg></button>
          <button aria-label="Symbolleiste"><svg width="18" height="18" viewBox="0 0 18 18"><rect x=".8" y="1" width="16.400" height="15.500" rx="1.500" fill="none" stroke="#fff" stroke-width="1.300" /><path d="M1 1h16v4H1z" fill="#fff" /><path d="M5.500 9l3.500 3.500L12.500 9" fill="none" stroke="#fff" stroke-width="1.300" /></svg></button>
        </div>
        <div class="group">
          <button aria-label="Smart Controls"><svg width="22" height="22" viewBox="0 0 22 22"><circle cx="11" cy="11.500" r="6.500" fill="none" stroke="#fff" stroke-width="1.200" /><path d="M11 11.500L7 16" stroke="#fff" stroke-width="1.300" /><g fill="#fff"><circle cx="11" cy="1.500" r="1" /><circle cx="4" cy="4.500" r="1" /><circle cx="18" cy="4.500" r="1" /><circle cx="1.200" cy="11.500" r="1" /><circle cx="20.800" cy="11.500" r="1" /><circle cx="4" cy="18.500" r="1" /><circle cx="18" cy="18.500" r="1" /></g></svg></button>
          <button aria-label="Mixer"><svg width="22" height="20" viewBox="0 0 22 20"><path d="M3.500 1v18M11 1v18M18.500 1v18" stroke="#fff" stroke-width="1.400" /><path d="M1 10h5M8.500 14.500h5M16 6h5" stroke="#fff" stroke-width="3" /></svg></button>
          <button aria-label="Editoren"><svg width="16" height="20" viewBox="0 0 16 20"><g fill="none" stroke="#fff" stroke-width="1.300"><path d="M4 1l6.500 13.500M12 1L5.500 14.500" /><circle cx="4" cy="16.500" r="2.500" /><circle cx="12" cy="16.500" r="2.500" /></g></svg></button>
        </div>
        <div class="group transport">
          <button aria-label="Zurückspulen"><svg width="22" height="14" viewBox="0 0 22 14"><path d="M11 1v12L1 7zM21 1v12L11 7z" fill="#fff" /></svg></button>
          <button aria-label="Vorspulen"><svg width="22" height="14" viewBox="0 0 22 14"><path d="M1 1v12l10-6zM11 1v12l10-6z" fill="#fff" /></svg></button>
          <button aria-label="Zum Anfang"><svg width="16" height="16" viewBox="0 0 16 16"><path d="M1 0h2v16H1zM15 0v16L3 8z" fill="#fff" /></svg></button>
          <button aria-label="Wiedergabe"><svg width="16" height="16" viewBox="0 0 16 16"><path d="M1 0l15 8-15 8z" fill="#fff" /></svg></button>
          <button aria-label="Aufnahme"><svg width="18" height="18" viewBox="0 0 18 18"><circle cx="9" cy="9" r="8.500" fill="#c93028" /></svg></button>
          <button aria-label="Cycle"><svg width="22" height="22" viewBox="0 0 22 22"><g fill="none" stroke="#fff" stroke-width="1.300"><path d="M4.500 15.500C-.5 9 5 3 13 4M17.500 6.500c5 6.500-.5 12.500-8.500 11.500" /><path d="M10.500 1l3 3-3 3M11.500 15l-3 3 3 3" /></g></svg></button>
        </div>

        <section class="lcd" aria-label="LCD">
          <div class="cell pos">
            <p class="big">01:00:14:23.41</p>
            <p class="big split"><span><i>000</i>8</span><span>2</span><span>4</span><span>127</span></p>
          </div>
          <div class="cell loc">
            <p class="big split"><span><i>000</i>1</span><span>1</span><span>1</span><span><i>00</i>1</span></p>
            <p class="big split"><span><i>000</i>3</span><span>2</span><span>3</span><span><i>00</i>1</span></p>
          </div>
          <div class="cell tempo"><p class="big">120,0000</p><p class="mini-text">Tempo beibehalten</p></div>
          <div class="cell sig"><p>4/4</p><p>/16</p></div>
          <div class="cell midi"><p>Kein In</p><p>Kein Out</p></div>
          <div class="cell load"><p>CPU <b></b></p><p>HD <b></b></p></div>
          <button class="lcd-menu" aria-label="Anzeigemodus">{@render chevron()}</button>
        </section>

        <div class="group">
          <button aria-label="Ersetzen"><svg width="20" height="18" viewBox="0 0 20 18"><path d="M2 1h16v8c0 5-4 8-8 8s-8-3-8-8z" fill="none" stroke="#fff" stroke-width="1.300" /><path d="M7 5l6 6M13 5l-6 6" stroke="#fff" stroke-width="1.400" /></svg></button>
          <button aria-label="Vorhören"><svg width="16" height="20" viewBox="0 0 16 20"><path d="M1 6h6l8-5v18l-8-5H1z" fill="#fff" /></svg></button>
          <button class="auto" aria-label="Auto"><svg width="16" height="13" viewBox="0 0 16 13"><path d="M1 4h4l6-4v13L5 9H1z" fill="#fff" /><circle cx="14" cy="6.500" r="1.500" fill="#fff" /></svg><span>AUTO</span></button>
          <button aria-label="Stimmen"><svg width="20" height="20" viewBox="0 0 20 20"><g fill="none" stroke="#aaa" stroke-width="1.300"><path d="M1 19l7-7M7 13c-1-3 0-4 2-6l6-6M7 13c3 1 4 0 6-2l6-6" /></g></svg></button>
          <button aria-label="Solo"><span class="solo">S</span></button>
        </div>
        <div class="group">
          <button class="violet">1234</button>
          <button aria-label="Metronom"><svg width="18" height="20" viewBox="0 0 18 20"><path d="M7 2h4l5 16H2z" fill="none" stroke="#fff" stroke-width="1.400" /><path d="M2.500 14h13l1 5h-15z" fill="#fff" /><path d="M8 13l8-9M7 6l3 6" stroke="#fff" stroke-width="1.400" /></svg></button>
        </div>
        <div class="group">
          <button aria-label="Listen"><svg width="18" height="18" viewBox="0 0 18 18"><path d="M5 2h12M5 9h12M5 16h12" stroke="#fff" stroke-width="1.300" /><path d="M0 2h2.500M0 9h2.500M0 16h2.500" stroke="#fff" stroke-width="2" /></svg></button>
          <button aria-label="Notizen"><svg width="20" height="19" viewBox="0 0 20 19"><path d="M13 3H1v15h16V8" fill="none" stroke="#fff" stroke-width="1.400" /><path d="M1 2h12v3H1z" fill="#fff" /><path d="M9 11l9-9" stroke="#fff" stroke-width="2.400" /></svg></button>
          <button aria-label="Loops"><svg width="20" height="20" viewBox="0 0 20 20"><path d="M1 18.500h7C3 16 2 13 2 10c0-5 4-8.500 8-8.500s8 3.500 8 8.500c0 3-1 6-6 8.500h7" fill="none" stroke="#fff" stroke-width="1.300" /></svg></button>
          <button aria-label="Medien"><svg width="22" height="20" viewBox="0 0 22 20"><path d="M1 5h5v13h5v1H1zM2 7h2M2 10h2" fill="none" stroke="#fff" stroke-width="1.400" /><path d="M1 12h10" stroke="#fff" stroke-width="1.200" /><path d="M6 3h3l1-2h4l1 2h3v7H6z" fill="#fff" /><circle cx="12" cy="6.500" r="2.200" fill="#888" /><path d="M14 18v-6h6v5" fill="none" stroke="#fff" stroke-width="1.800" /><circle cx="13" cy="18" r="1.800" fill="#fff" /><circle cx="19" cy="17" r="1.800" fill="#fff" /></svg></button>
        </div>
      </div>
    </header>

    <div class="body">
      <aside class="inspector">
        <button class="disclosure"><svg width="8" height="11" viewBox="0 0 8 11"><path d="M0 0l8 5.500L0 11z" fill="#d6d6d6" /></svg><span>Region:</span><b>[BVG] Ans...a Jarke.44</b></button>
        <button class="disclosure"><svg width="8" height="11" viewBox="0 0 8 11"><path d="M0 0l8 5.500L0 11z" fill="#d6d6d6" /></svg><span>Spur:</span><b>Schützallee</b></button>
        <div class="strips">
          <section class="strip" aria-label="Schützallee">
            <div class="slot s-blank faint"></div>
            <div class="pair s-input"><button class="faint">48</button><button class="faint" aria-label="Filter"><svg width="14" height="10" viewBox="0 0 14 10"><path d="M0 9l5-7.500h9" fill="none" stroke="#aaa" stroke-width="1.300" /></svg></button><button class="faint" aria-label="Phase"><svg width="10" height="12" viewBox="0 0 10 12"><circle cx="5" cy="6" r="3.500" fill="none" stroke="#aaa" stroke-width="1.200" /><path d="M5 0v12" stroke="#aaa" stroke-width="1.200" /></svg></button></div>
            <div class="gain s-gain"><span></span><svg width="16" height="16" viewBox="0 0 16 16"><path d="M4 14A7 7 0 1 1 12 14" fill="none" stroke="#444" stroke-width="2.500" /><circle cx="8" cy="8" r="5" fill="#777" /></svg></div>
            <button class="slot s-direct faint">Direkt</button>
            <button class="slot s-setting">Setting</button>
            <div class="thin s-thin"></div>
            <button class="eq s-eq" aria-label="EQ"><svg width="69" height="31" viewBox="0 0 69 31"><rect width="69" height="31" fill="#262626" /><path d="M4 16h62" stroke="#000" stroke-width="1.500" /><path d="M4 17h18c-2 5-4 12-10 12H4z" fill="#4a5f80" /><path d="M13 29c8 0 8-13 11-14h28c8 0 11 2 13 6" fill="none" stroke="#6ea2e6" stroke-width="1.300" /></svg></button>
            <div class="pair s-in"><button class="ring" aria-label="Format">{@render rings('#fff')}</button><button class="wide">Eingang</button></div>
            <div class="fx s-fx"><button>ValhallaVi</button><button>Channel EQ</button></div>
            <div class="sends s-sends"><button>Sends</button><span></span></div>
            <button class="slot s-out lit">Stereo</button>
            <button class="slot s-group flat">Gruppe</button>
            <button class="slot s-read green">Read</button>
            <div class="pan s-pan">{@render knob(36, '#8c8c8c')}</div>
            <div class="vals s-vals"><output>-13,8</output><output></output></div>
            <div class="s-fader">{@render fader('left', 27, '#3f302a')}</div>
            <div class="ri s-ri"><button class="red">R</button><button>I</button></div>
            <div class="ms s-ms"><button class="on">M</button><button>S</button></div>
            <p class="s-name">Schützallee</p>
          </section>
          <section class="strip" aria-label="Stereo Out">
            <button class="slot s-setting">Setting</button>
            <div class="thin s-thin"></div>
            <button class="eq s-eq empty">EQ</button>
            <button class="slot s-in" aria-label="Format">{@render rings('#fff')}</button>
            <button class="fx s-fx empty">Audio FX</button>
            <button class="slot s-group flat">Gruppe</button>
            <button class="slot s-read lit">Read</button>
            <div class="pan s-pan">{@render knob(36, '#8c8c8c')}</div>
            <div class="vals s-vals"><output>0,0</output><output class="green">-13,1</output></div>
            <div class="s-fader">{@render fader('right', 83, '#3f2c2a')}</div>
            <div class="ms s-ri end"><button>Bnce</button></div>
            <div class="ms s-ms"><button>M</button></div>
            <p class="s-name">Stereo Out</p>
          </section>
        </div>
      </aside>

      <section class="arrange">
        <div class="bar">
          <div class="btns"><button class="dim" aria-label="Ebene höher"><svg width="12" height="14" viewBox="0 0 12 14"><path d="M5 1v7c0 3 2 5 6 5M1 5l4-4 4 4" fill="none" stroke="#8a8a8a" stroke-width="1.200" /></svg></button></div>
          <div class="btns menus">
            <button>Bearbeiten {@render chevron()}</button>
            <button>Funktionen {@render chevron()}</button>
            <button>Ansicht {@render chevron()}</button>
          </div>
          <div class="btns">
            <button aria-label="Automation"><svg width="22" height="14" viewBox="0 0 22 14"><path d="M0 11.500h8l6-9h8" fill="none" stroke="#eee" stroke-width="1.300" /><circle cx="8" cy="11" r="2.300" fill="#eee" /><circle cx="14" cy="3" r="2.300" fill="#eee" /></svg></button>
            <button aria-label="Flex"><svg width="22" height="14" viewBox="0 0 22 14"><path d="M1 1c7 1 13 9 20 12V1C14 4 8 12 1 13z" fill="none" stroke="#eee" stroke-width="1.200" /><path d="M4 5v4M7 6v2M15 6v2M18 5v4" stroke="#eee" /></svg></button>
          </div>
          <div class="btns"><button class="blue" aria-label="Catch"><svg width="22" height="14" viewBox="0 0 22 14"><path d="M1 4l4 3-4 3M21 4l-4 3 4 3" fill="none" stroke="#fff" stroke-width="1.300" /><path d="M7 1h8v2l-3 3v7h-2V6L7 3z" fill="#fff" /></svg></button></div>
          <div class="fill"></div>
          <div class="btns tools">
            <button aria-label="Zeigerwerkzeug"><svg width="10" height="14" viewBox="0 0 10 14"><path d="M0 0v12l3-3 2 5 2-1-2-4h4z" fill="#fff" /></svg>{@render chevron()}</button>
            <button aria-label="Zweites Werkzeug"><svg width="14" height="14" viewBox="0 0 14 14"><path d="M2 2l10 10" stroke="#fff" stroke-width="1.800" /><circle cx="2.500" cy="2.500" r="2" fill="#fff" /><circle cx="11.500" cy="11.500" r="2" fill="#fff" /></svg>{@render chevron()}</button>
          </div>
          <label class="sel snap"><span>Einrasten:</span><span class="box"><select><option>Intelligent</option></select>{@render updown()}</span></label>
          <label class="sel drag"><span>Verschieben:</span><span class="box"><select><option>Keine Überlapp.</option></select>{@render updown()}</span></label>
          <div class="btns"><button aria-label="Wellenform"><svg width="22" height="14" viewBox="0 0 22 14"><path d="M1 6v2M3 5v4M5 6v2M7 4v6M9 2v10M11 0v14M13 3v8M15 4v6M17 6v2M19 5v4M21 6v2" stroke="#ddd" stroke-width="1.200" /></svg></button></div>
          <div class="btns">
            <button aria-label="Vertikal zoomen"><svg width="16" height="14" viewBox="0 0 16 14"><path d="M1 .7h14M1 13.300h14M8 2v10M5 5l3-3 3 3M5 9l3 3 3-3" fill="none" stroke="#ddd" stroke-width="1.300" /></svg></button>
            <button aria-label="Horizontal zoomen"><svg width="16" height="14" viewBox="0 0 16 14"><path d="M1 1v12M15 1v12M2 7h12M5 4L2 7l3 3M11 4l3 3-3 3" fill="none" stroke="#ddd" stroke-width="1.300" /></svg></button>
          </div>
          <div class="btns zoom">
            <label><svg width="8" height="14" viewBox="0 0 8 14"><path d="M4 1v12M1 4l3-3 3 3M1 10l3 3 3-3" fill="none" stroke="#aaa" stroke-width="1.100" /></svg><input type="range" value="33" aria-label="Zoom vertikal" /></label>
            <label><svg width="14" height="8" viewBox="0 0 14 8"><path d="M1 4h12M4 1L1 4l3 3M10 1l3 3-3 3" fill="none" stroke="#aaa" stroke-width="1.100" /></svg><input type="range" value="33" aria-label="Zoom horizontal" /></label>
          </div>
        </div>

        <div class="split-view">
          <div class="headers">
            <div class="headtools">
              <button aria-label="Neue Spur"><svg width="13" height="13" viewBox="0 0 13 13"><path d="M6.500 0v13M0 6.500h13" stroke="#eee" stroke-width="1.300" /></svg></button>
              <button aria-label="Spur duplizieren"><svg width="17" height="14" viewBox="0 0 17 14"><rect width="12" height="11" rx="1" fill="#f2f2f2" /><path d="M14 4h2v9H6v-1" fill="none" stroke="#f2f2f2" stroke-width="1.400" /><path d="M6 2.500v6M3 5.500h6" stroke="#333" stroke-width="1.400" /></svg></button>
              <button class="s">S</button>
              <button class="last" aria-label="Konfigurieren"><svg width="13" height="12" viewBox="0 0 13 12"><rect x=".6" y=".6" width="11.800" height="10.800" fill="none" stroke="#ddd" stroke-width="1.200" /><path d="M1 1.500h11" stroke="#ddd" stroke-width="2" /><path d="M4 5.500l2.500 3L9 5.500" fill="none" stroke="#ddd" /></svg></button>
            </div>
            {#each tracks as t, i}
              <div class="track" class:selected={t.selected}>
                <span class="num">{i + 1}</span>
                <span class="ticon"><svg width="33" height="20" viewBox="0 0 33 20"><g stroke="#4da3e8" stroke-width="1.200">{#each trackBars as h, b}<path d="M{2.5 + b * 2} {10 - h / 2}v{h}" />{/each}</g></svg></span>
                <div class="tmain">
                  <span class="tname">{t.name}</span>
                  <div class="tctl">
                    <div class="msbtn"><button class:on={t.muted}>M</button><button>S</button></div>
                    <div class="msbtn"><button class:red={t.selected}>R</button></div>
                    <input class="hrange" type="range" value="30" aria-label="Lautstärke {t.name}" />
                  </div>
                </div>
                <div class="tpan">{@render knob(28, t.selected ? '#c8c8c8' : '#8c8c8c')}<small><span>L</span><span>R</span></small></div>
              </div>
            {/each}
          </div>

          <div class="timeline">
            <div class="ruler">
              <div class="cycle"></div>
              {#each bars as b}<span class="bar-no" style="left: {b.x}px">{b.n}</span>{/each}
              {#each ticks as x}<i style="left: {x}px"></i>{/each}
              <svg class="start" width="8" height="14" viewBox="0 0 8 14"><path d="M0 0h2l5 7-5 7H0z" fill="#777" stroke="#bbb" stroke-width=".8" /></svg>
            </div>
            <div class="lanes">
              {#each bars as b}<i class="grid" style="left: {b.x}px"></i>{/each}
              {#each tracks as t}
                <div class="lane">
                  {#each t.regions as r}
                    <div class="region" class:muted={t.muted && !r.selected} class:picked={r.selected} style="left: {r.x}px; width: {r.w}px">
                      <span class="rname">{r.label}{#if r.selected}{@render rings('#2c2a6c')}{/if}</span>
                      <svg class="wave" width={r.w - 2} height="24" viewBox="0 0 {r.w - 2} 24">
                        <path d={wavePath(r)} fill="currentColor" />
                        {#if !r.selected}<path d="M0 0h8L2 24H0z" fill="#fff" opacity=".22" />{/if}
                        {#if r.fade}
                          <path d={r.curve ? `M${r.w - 2 - r.fade} 0H${r.w - 2}V24C${r.w - 3} 8 ${r.w - 6} 3 ${r.w - 2 - r.fade} 0z` : `M${r.w - 2 - r.fade} 0H${r.w - 2}V24z`} fill="#fff" fill-opacity=".2" stroke="#fff" stroke-opacity=".45" />
                        {/if}
                      </svg>
                    </div>
                  {/each}
                  {#if t.selected}<span class="next-loop">[BVG] Ansagen</span>{/if}
                </div>
              {/each}
            </div>
            <div class="playhead"><svg width="13" height="13" viewBox="0 0 13 13"><path d="M1 0h11v6l-5 7h-1L1 6z" fill="#b9b9b9" stroke="#888" /><path d="M6.500 3v10" stroke="#fff" stroke-width="1.500" /></svg></div>
          </div>
        </div>
      </section>
    </div>
  </main>

  <footer class="wallpaper">
    <div class="dock">
      {#each leftApps as app}{@render dockItem(app)}{/each}
      <span class="sep"></span>
      {#each middleApps as app}{@render dockItem(app)}{/each}
      <span class="sep"></span>
      {#each rightApps as app}{@render dockItem(app)}{/each}
    </div>
  </footer>
</div>

<style>
  :global(body) { background: #222; }
  * { box-sizing: border-box; }
  .desktop {
    min-height: 100vh;
    display: flex;
    flex-direction: column;
    overflow: hidden;
    font-family: Inter, "Liberation Sans", sans-serif;
    font-size: 12px;
    color: #e4e4e4;
  }
  button, select, input { font: inherit; color: inherit; margin: 0; }
  button { border: 0; padding: 0; background: none; display: flex; align-items: center; justify-content: center; }
  p, h1 { margin: 0; }
  svg { display: block; flex-shrink: 0; }

  /* Menu bar */
  .menubar {
    height: 22px;
    display: flex;
    align-items: center;
    gap: 17px;
    padding: 0 22px 0 20px;
    background: #222;
    color: #f2f2f2;
    font-size: 14px;
    font-weight: 500;
    white-space: nowrap;
  }
  .strong { font-weight: 700; }
  .status { margin-left: auto; display: flex; align-items: center; gap: 15px; }
  .battery { display: flex; align-items: center; gap: 4px; }
  .small { font-size: 12px; }

  /* Window chrome */
  .window {
    flex: 1;
    display: flex;
    flex-direction: column;
    background: #8d8d8d;
    border-top: 1px solid #cfd6db;
  }
  .chrome { background: linear-gradient(#bdbdbd, #8d8d8d); padding: 0 9px 8px; }
  .titlebar { height: 25px; padding-bottom: 2px; display: flex; align-items: center; justify-content: center; gap: 6px; position: relative; }
  .titlebar h1 { font-size: 13px; font-weight: 400; color: #444; }
  .lights { position: absolute; left: 0; display: flex; gap: 8px; }
  .lights button { width: 12px; height: 12px; border-radius: 50%; }
  .close { background: radial-gradient(circle, #5b0a06 2px, #fc5650 2px); }
  .mini { background: #fdbc2e; }
  .full { background: #27c83f; }
  .toolrow { display: flex; align-items: center; gap: 9px; height: 49px; }
  .group { display: flex; height: 34px; border-radius: 4px; background: #7f7f7f; box-shadow: 0 1px 0 #777; overflow: hidden; flex-shrink: 0; }
  .group button { width: 36px; }
  .group button:last-child { width: 37px; }
  .group button + button { border-left: 1px solid #6d6d6d; }
  .transport { margin-left: 9px; }
  .transport button:not(:last-child) { width: 44px; }
  .group .dark { background: #585858; }
  .group .violet { background: #7640b0; color: #fff; font-size: 12px; }
  .group .auto { flex-direction: column; gap: 2px; font-size: 9px; font-weight: 600; color: #fff; }
  .solo { border: 1px solid #fff; border-radius: 2px; width: 18px; height: 18px; line-height: 16px; text-align: center; color: #fff; }

  /* LCD */
  .lcd { flex: 1; height: 49px; display: flex; background: #1b1f2d; border-radius: 3px; color: #a9c8e8; overflow: hidden; }
  .cell { display: flex; flex-direction: column; justify-content: space-around; border-right: 1px solid #2f4563; flex-shrink: 0; line-height: 23px; white-space: nowrap; }
  .big { font-size: 18px; font-weight: 300; font-variant-numeric: tabular-nums; }
  .split { display: flex; justify-content: space-between; width: 100%; }
  .split i { font-style: normal; color: #343b4b; }
  .pos { width: 150px; padding: 0 7px 0 6px; text-align: right; }
  .loc { width: 150px; padding: 0 7px; color: #5f7186; }
  .tempo { width: 101px; text-align: center; }
  .mini-text { font-size: 10px; }
  .sig { width: 72px; padding-right: 13px; text-align: right; font-size: 18px; font-weight: 300; }
  .sig p:first-child { padding-right: 8px; }
  .midi { flex: 1; padding-left: 8px; font-size: 14px; }
  .load { width: 82px; padding: 0 6px; font-size: 9px; color: #46566b; }
  .load p { display: flex; align-items: center; justify-content: space-between; }
  .load b { width: 45px; height: 4px; background: #28334a; }
  .lcd-menu { width: 14px; }
  .lcd-menu .chev { color: #c4d8ec; }

  /* Inspector */
  .body { flex: 1; display: grid; grid-template-columns: 228px minmax(0, 1fr); gap: 2px; padding: 0 2px 2px; }
  .inspector, .arrange { border: 1px solid #111; border-radius: 4px; overflow: hidden; display: flex; flex-direction: column; background: #606060; }
  .disclosure { height: 29px; justify-content: flex-start; gap: 7px; padding-left: 11px; background: #484848; border-bottom: 1px solid #151515; color: #aaa; white-space: nowrap; }
  .disclosure b { font-weight: 400; color: #f0f0f0; }
  .strips { flex: 1; display: grid; grid-template-columns: 1fr 1fr; }
  .strip {
    display: grid;
    grid-template-columns: 69px;
    grid-template-rows: 22px 22px 22px 23px 22px 10px 44px 25px 52px 26px 23px 23px 26px 41px 39px 142px 20px 28px 19px;
    align-content: end;
    justify-content: center;
    align-items: start;
    padding-right: 2px;
    font-size: 11px;
  }
  .strip + .strip { border-left: 1px solid #484848; }
  .s-blank { grid-row: 1; } .s-input { grid-row: 2; } .s-gain { grid-row: 3; } .s-direct { grid-row: 4; }
  .s-setting { grid-row: 5; } .s-thin { grid-row: 6; } .s-eq { grid-row: 7; } .s-in { grid-row: 8; }
  .s-fx { grid-row: 9; } .s-sends { grid-row: 10; } .s-out { grid-row: 11; } .s-group { grid-row: 12; }
  .s-read { grid-row: 13; } .s-pan { grid-row: 14; } .s-vals { grid-row: 15; } .s-fader { grid-row: 16; }
  .s-ri { grid-row: 17; } .s-ms { grid-row: 18; } .s-name { grid-row: 19; }
  .slot, .pair { height: 18px; width: 69px; border: 1px solid #444; border-radius: 3px; background: #555; color: #2a2a2a; }
  .slot.faint { background: #5a5a5a; border-color: #505050; color: #9e9e9e; }
  .slot.lit { color: #f0f0f0; }
  .slot.green { color: #55e070; }
  .slot.flat { border-color: #4f4f4f; border-radius: 0; }
  .pair { display: flex; }
  .s-input { background: #5a5a5a; border-color: #505050; color: #a5a5a5; }
  .pair button { flex: 1; }
  .pair button + button { border-left: 1px solid #4b4b4b; }
  .pair .ring { flex: 0 0 18px; }
  .gain, .sends { display: flex; gap: 3px; align-items: center; height: 18px; }
  .gain span { width: 50px; height: 18px; background: #484848; }
  .thin { height: 7px; margin: 0 1px; background: #585858; border: 1px solid #4f4f4f; }
  .eq { width: 69px; height: 31px; }
  .eq.empty { background: #565656; border: 1px solid #4b4b4b; color: #222; }
  .fx { width: 69px; height: 43px; background: #555; border-radius: 3px; color: #222; }
  .fx button { width: 69px; height: 17px; background: #3069a8; border: 1px solid #234c7c; border-radius: 3px; color: #f2f2f2; }
  .sends button { width: 50px; height: 18px; background: #555; border-radius: 3px; color: #2a2a2a; }
  .sends span { width: 16px; height: 16px; border-radius: 50%; background: #545454; }
  .pan { display: flex; justify-content: center; }
  .vals { display: flex; gap: 3px; }
  .vals output { width: 33px; height: 18px; line-height: 18px; background: #303030; text-align: center; color: #f2f2f2; }
  .vals .green { color: #4fd468; }
  .fader { position: relative; height: 137px; }
  .fader svg { overflow: visible; }
  .fader text { font-size: 8px; fill: #c0c0c0; }
  .vrange { position: absolute; left: 8px; top: 0; width: 18px; height: 137px; writing-mode: vertical-lr; direction: rtl; appearance: none; background: none; }
  .vrange::-webkit-slider-thumb {
    appearance: none;
    width: 18px;
    height: 35px;
    border-radius: 1px;
    background: linear-gradient(#8a8a8a 0, #c9c9c9 5px, #808080 6px, #9c9c9c 16px, #444 17px, #b3b3b3 18px, #d0d0d0 30px, #777 31px);
    box-shadow: 0 2px 3px #333;
  }
  .ri, .ms { display: flex; gap: 3px; font-size: 12px; color: #eee; }
  .ri { justify-self: end; gap: 0; width: 33px; height: 18px; border: 1px solid #444; border-radius: 3px; background: #555; }
  .ri button { flex: 1; }
  .ri button + button { border-left: 1px solid #444; }
  .ms button { width: 33px; height: 18px; border: 1px solid #444; border-radius: 3px; background: #555; }
  .end { justify-content: flex-end; }
  .ms .on, .msbtn .on { background: #227a80; }
  .red { color: #f0433a; }
  .s-name { text-align: center; line-height: 16px; }

  /* Arrange toolbar */
  .bar { height: 29px; display: flex; align-items: center; gap: 8px; padding: 0 8px; background: #484848; border-bottom: 1px solid #151515; white-space: nowrap; }
  .btns { display: flex; height: 20px; border-radius: 3px; background: #3c3c3c; box-shadow: 0 0 0 1px #333; }
  .btns button { width: 33px; }
  .btns button + button, .zoom label + label { border-left: 1px solid #2c2c2c; }
  .btns .dim { background: #444; }
  .btns .blue { background: #2f68a8; border-radius: 3px; }
  .menus button { width: 102px; justify-content: space-between; padding: 0 8px 0 11px; }
  .menus button:last-child { width: 84px; }
  .chev { color: #aaa; }
  .fill { flex: 1; }
  .tools button { width: 43px; gap: 10px; }
  .sel { display: flex; align-items: center; gap: 4px; margin-left: 2px; color: #aaa; }
  .box { position: relative; display: flex; align-items: center; }
  .sel select { appearance: none; height: 20px; border: 0; border-radius: 3px; background: #3c3c3c; box-shadow: 0 0 0 1px #333; padding: 0 22px 0 10px; color: #f0f0f0; }
  .snap > span:first-child { width: 60px; }
  .drag > span:first-child { width: 78px; }
  .snap select { width: 162px; }
  .drag select { width: 130px; }
  .updown { position: absolute; right: 6px; }
  .zoom label { display: flex; align-items: center; gap: 7px; width: 75px; padding-left: 8px; }
  .zoom label + label { gap: 5px; padding-left: 4px; }
  .zoom input {
    appearance: none;
    width: 43px;
    height: 14px;
    background: linear-gradient(#2a2a2a, #2a2a2a) center / 100% 3px no-repeat, repeating-linear-gradient(90deg, #777 0, #777 1px, transparent 1px, transparent 14px) top / 100% 2px no-repeat;
  }
  .zoom input::-webkit-slider-thumb { appearance: none; width: 10px; height: 11px; background: #aaa; clip-path: polygon(50% 0, 100% 50%, 100% 100%, 0 100%, 0 50%); }

  /* Track headers */
  .split-view { flex: 1; display: grid; grid-template-columns: 326px minmax(0, 1fr); }
  .headers { border-right: 1px solid #111; background: #606060; }
  .headtools { height: 36px; display: flex; gap: 8px; padding: 6px 8px 0; background: #555; border-bottom: 1px solid #111; }
  .headtools button { width: 33px; height: 21px; border-radius: 3px; background: #444; border: 1px solid #3a3a3a; }
  .headtools .s { font-size: 16px; }
  .headtools .last { margin-left: auto; }
  .track { height: 49px; display: flex; align-items: center; border-bottom: 1px solid #4b4b4b; background: #626262; }
  .track.selected { background: #838383; }
  .num { width: 21px; align-self: stretch; display: flex; align-items: center; justify-content: center; border-right: 1px solid #4b4b4b; font-size: 13px; }
  .ticon { width: 37px; height: 27px; margin: 0 9px; display: flex; align-items: center; justify-content: center; background: #2c3846; border-radius: 2px; }
  .tmain { width: 200px; align-self: flex-start; padding-top: 3px; }
  .tname { display: block; font-size: 13px; line-height: 20px; color: #f2f2f2; white-space: nowrap; }
  .tctl { display: flex; align-items: center; gap: 6px; height: 22px; }
  .msbtn { display: flex; height: 18px; border: 1px solid #444; border-radius: 3px; background: #555; font-size: 13px; overflow: hidden; }
  .msbtn button { width: 19px; }
  .msbtn button + button { width: 20px; border-left: 1px solid #444; }
  .hrange { appearance: none; width: 120px; height: 18px; margin-left: 5px; background: none; }
  .hrange::-webkit-slider-runnable-track { height: 12px; border-radius: 6px; background: #323330; }
  .hrange::-webkit-slider-thumb { appearance: none; width: 18px; height: 18px; margin-top: -3px; border-radius: 50%; background: #8a8c8a; border: 1px solid #b0b0b0; }
  .tpan { width: 28px; margin-left: 10px; }
  .tpan small { display: flex; justify-content: space-between; padding: 0 2px; font-size: 7px; line-height: 6px; color: #aaa; }

  /* Timeline */
  .timeline { position: relative; background: #b1b1b1; overflow: hidden; }
  .ruler { position: relative; height: 36px; background: linear-gradient(#333 17px, #1c1c1c 17px, #1c1c1c 18px, #363636 18px); border-bottom: 1px solid #111; overflow: hidden; }
  .cycle { position: absolute; left: 9px; top: 0; width: 295px; height: 18px; background: #4b4b4b; border: 1px solid #111; border-width: 0 1px 1px 0; }
  .bar-no { position: absolute; top: 2px; height: 34px; border-left: 1px solid #666; padding-left: 4px; line-height: 11px; font-size: 12px; font-weight: 500; color: #ccc; }
  .ruler i { position: absolute; bottom: 0; width: 1px; height: 6px; background: #666; }
  .start { position: absolute; left: 0; top: 2px; }
  .lanes { position: relative; overflow: hidden; }
  .grid { position: absolute; top: 0; bottom: 0; width: 1px; background: #fff; }
  .lane { position: relative; height: 49px; border-bottom: 1px solid #111; overflow: hidden; }
  .region { position: absolute; top: 0; height: 48px; border: 1px solid #0c0c0c; border-radius: 5px; background: #3a3584; color: #aaa6dc; overflow: hidden; }
  .region.muted { background: rgba(94, 94, 94, 0.88); color: #cacaca; }
  .region.picked { background: linear-gradient(#e4e4e4 18px, #676767 18px); color: #d6d6d6; }
  .rname { display: flex; align-items: center; gap: 8px; height: 18px; padding-left: 5px; font-size: 11px; font-weight: 500; color: #eeeefa; white-space: nowrap; }
  .muted .rname { color: #8883ee; }
  .picked .rname { color: #2c2a6c; }
  .wave { margin-top: 1px; }
  .next-loop { position: absolute; right: 0; top: 2px; width: 77px; height: 16px; line-height: 16px; font-size: 11px; font-weight: 500; color: #2c2a6c; white-space: nowrap; overflow: hidden; }
  .playhead { position: absolute; left: 927px; top: 18px; bottom: 0; width: 13px; background: linear-gradient(90deg, transparent 5px, #777 5px, #777 6px, #ccc 6px, #ccc 7px, #777 7px, #777 8px, transparent 8px); }

  /* Dock */
  .wallpaper {
    height: 49px;
    display: flex;
    justify-content: center;
    background: repeating-linear-gradient(2deg, rgba(0, 0, 0, 0.25) 0, transparent 3px, rgba(0, 0, 0, 0.15) 5px, transparent 9px), linear-gradient(90deg, #5a3a2a, #3b251b 3%, #2a1b14 50%, #a86a14 97%, #c98a1e);
  }
  .dock { display: flex; padding: 0 3px; background: #222; border-radius: 5px 5px 0 0; box-shadow: 0 0 0 1px #3a3a3a; }
  .app { position: relative; width: 40px; height: 46px; }
  .badge { position: absolute; right: 2px; top: 2px; width: 14px; height: 14px; border-radius: 50%; background: #ea3c38; color: #fff; font-size: 10px; line-height: 14px; text-align: center; }
  .dot { position: absolute; left: 18px; top: 43px; width: 4px; height: 4px; border-radius: 50%; background: #aaa; }
  .sep { width: 1px; height: 26px; margin: 10px 9px 0 8px; background: #555; }
</style>
